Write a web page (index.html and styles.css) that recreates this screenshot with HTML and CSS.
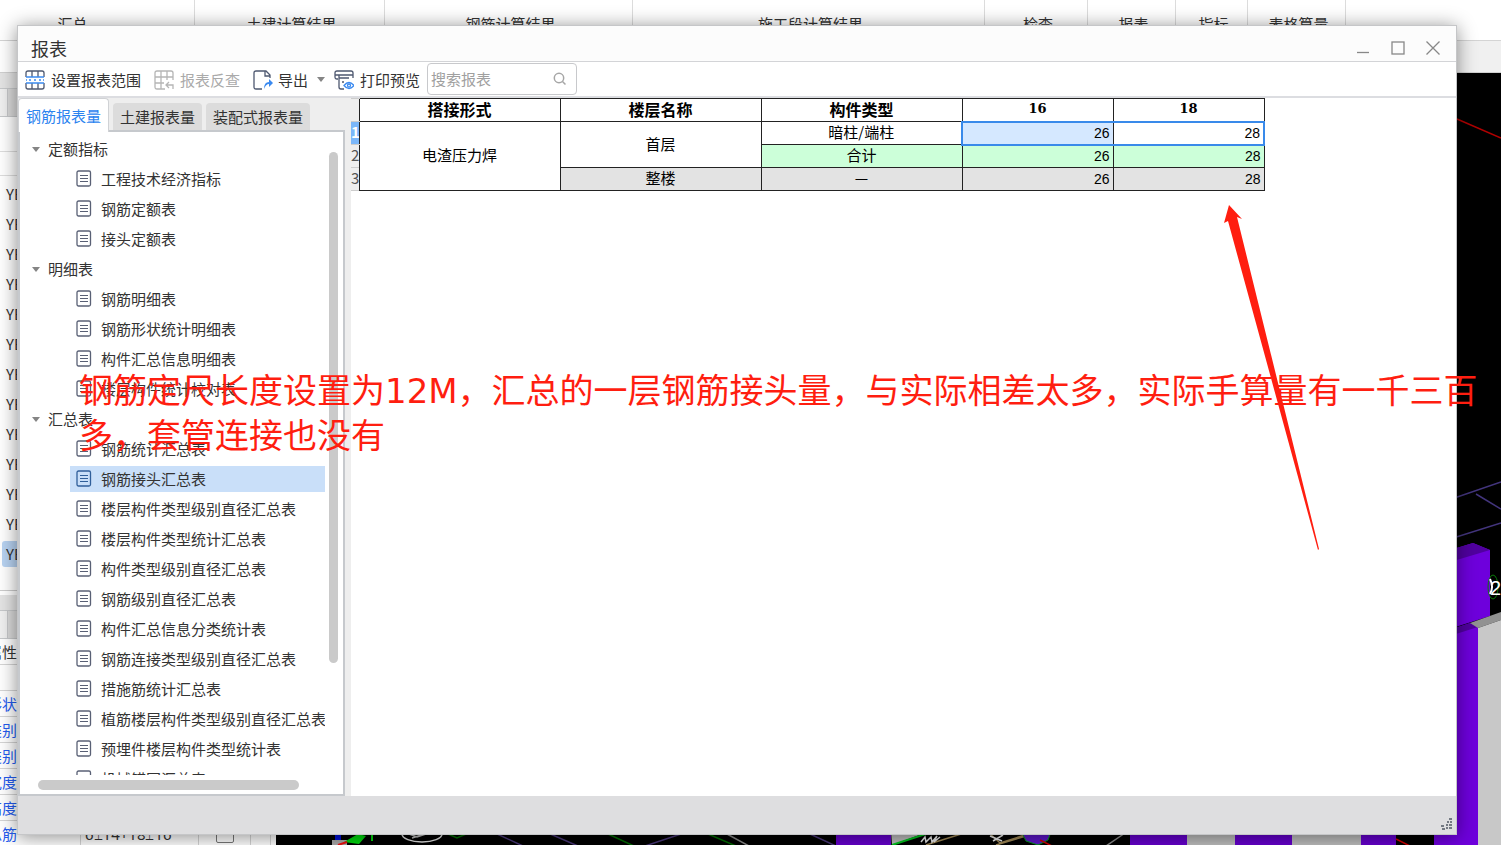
FILE: index.html
```html
<!DOCTYPE html>
<html lang="zh-CN">
<head>
<meta charset="utf-8">
<title>报表</title>
<link rel="stylesheet" href="styles.css">
</head>
<body>
<svg class="defs" aria-hidden="true">
  <symbol id="doc" viewBox="0 0 16 17"><rect x="1" y="1" width="13.500" height="15" rx="1.500" fill="none" stroke="currentColor" stroke-width="1.300"/><path d="M4 5.500h8M4 8.500h8M4 11.500h8" stroke="currentColor" stroke-width="1.200"/></symbol>
</svg>
<div class="desktop">
  <div class="app" aria-hidden="true">
    <div class="ribbon">
      <span class="group g-sum">汇总</span><span class="group g-civil">土建计算结果</span><span class="group g-rebar">钢筋计算结果</span><span class="group g-stage">施工段计算结果</span><span class="group g-check">检查</span><span class="group g-report">报表</span><span class="group g-index">指标</span><span class="group g-table">表格算量</span>
    </div>
    <div class="substrip"></div>
    <div class="workspace">
      <div class="side">
        <div class="bar"></div>
        <div class="side-tabs"></div>
        <div class="side-tools"></div>
        <div class="side-search"></div>
        <div class="members">
          <span>YBZ</span><span>YBZ</span><span>YBZ</span><span>YBZ</span><span>YBZ</span><span>YBZ</span><span>YBZ</span><span>YBZ</span><span>YBZ</span><span>YBZ</span><span>YBZ</span><span>YBZ</span><span class="current">YBZ</span>
        </div>
        <div class="bar lower"></div>
        <div class="side-tabs"></div>
        <div class="props">
          <div class="prop head"><b>属性</b></div>
          <div class="prop"><b></b></div>
          <div class="prop"><b>形状</b></div>
          <div class="prop"><b>类别</b></div>
          <div class="prop"><b>类别</b></div>
          <div class="prop"><b>宽度</b></div>
          <div class="prop"><b>高度</b></div>
          <div class="prop"><b>纵筋</b><span class="value">6⌶14+18⌶16</span><span class="tick"><i></i></span><span class="rest"></span></div>
        </div>
      </div>
      <svg class="scene" viewBox="276 73 1225 772" preserveAspectRatio="xMaxYMax slice">
        <rect x="276" y="73" width="1225" height="772" fill="#000"/>
        <path d="M1457 119l44 19" stroke="#b00000" stroke-width="1.500"/>
        <path d="M1450 499.500l51-17.500M1476 494l25 15M1450 539l51-16" stroke="#43357d" stroke-width="1.500"/>
        <path d="M1440 553l33-10 17 7v66l-50 16z" fill="#6e00dc"/>
        <path d="M1440 553l33-10 17 7-50 15z" fill="#50009f"/>
        <ellipse cx="1493" cy="587" rx="5" ry="12" fill="none" stroke="#0a7a0a"/>
        <path d="M1490 579q4 8 0 15" stroke="#fff" stroke-width="2" fill="none"/>
        <text x="1490" y="595" class="axis">23</text>
        <path d="M1440 633l30-10 8 4v218h-44v-11z" fill="#6e00dc"/>
        <path d="M1440 633l30-10 8 4-38 12z" fill="#50009f"/>
        <path d="M1470 623l31-11v8l-23 8z" fill="#929292"/>
        <path d="M1478 628l23-8v225h-23z" fill="#c8c8c8"/>
        <path d="M836 830h55v15h-55zM1130 830h57v15h-57zM1235 830h57v15h-57zM1361 830h35v15h-35z" fill="#6400cb"/>
        <path d="M891 830h42l-41 15zM1187 830h48v15h-48zM1292 830h69v15h-69z" fill="#bcbcbc"/>
        <path d="M892 845l46-15" stroke="#00c41e" stroke-width="2"/>
        <path d="M926 845l48-15M988 832l12 11 28-9M996 845l30-9" stroke="#9d8655" stroke-width="1.500" fill="none"/>
        <path d="M921 842l4-5 1 5 5-5 1 5 5-6-3 6 6-5M990 836l12 5M993 841l10-6" stroke="#e8e8e8" stroke-width="1.500" fill="none"/>
        <path d="M1022 833l4 8 12 4 10-5 3-8z" fill="#5b16c6" stroke="#009a1a"/>
        <path d="M1040 840l12 6M1396 839l14 7" stroke="#d00000" stroke-width="1.500"/>
        <path d="M1106 846l22-15M727 834l22 12" stroke="#888" stroke-width="1.500"/>
        <path d="M495 833l28 13M548 833l30 13M645 846l36-12M810 834l26 12" stroke="#493778" stroke-width="1.500"/>
        <path d="M448 834l9 4 9-4M608 834l26 12M708 834l28 12" stroke="#006c00" stroke-width="1.500" fill="none"/>
        <ellipse cx="422" cy="834" rx="20" ry="8" fill="none" stroke="#ddd" stroke-width="1.500"/>
        <path d="M409 834l8 3 15-5M412 838l16-5" stroke="#bbb" stroke-width="1.500" fill="none"/>
        <path d="M335 834h6v7h-6z" fill="#0010d8"/><path d="M332 840h15v5h-15z" fill="#aaa"/>
        <path d="M344 842l14-8 8 2-7 8zM371 834h2v7h-2z" fill="#00d80e"/>
        <path d="M338 845l9-3" stroke="#f01010" stroke-width="2"/>
      </svg>
    </div>
  </div>

  <main class="dialog">
    <header class="titlebar">
      <h1>报表</h1>
      <div class="controls">
        <button aria-label="最小化"><svg viewBox="0 0 14 14"><path d="M1 11.500h12"/></svg></button>
        <button aria-label="最大化"><svg viewBox="0 0 14 14"><rect x="1" y="1" width="12" height="12"/></svg></button>
        <button aria-label="关闭"><svg viewBox="0 0 14 14"><path d="M.5.5l13 13M13.500.5l-13 13"/></svg></button>
      </div>
    </header>
    <div class="toolbar">
      <button class="tool"><svg class="ico" viewBox="0 0 20 20"><path d="M1 7V3q0-2 2-2h14q2 0 2 2v4M1 13v4q0 2 2 2h14q2 0 2-2v-4M7 1v6M13 1v6M7 13v6M13 13v6" class="ln"/><path d="M1 7h18M1 13h18M1 10h1M4 10h2M9 10h2M14 10h2M18 10h1" class="bl"/></svg>设置报表范围</button>
      <button class="tool off" disabled><svg class="ico" viewBox="0 0 20 20"><path d="M11 19H3q-2 0-2-2V3q0-2 2-2h14q2 0 2 2v7M1 7h18M1 13h9M7 1v18M13 1v9M19 19v-4h-7M15 12l-3 3 3 3" class="ln"/></svg>报表反查</button>
      <button class="tool export"><svg class="ico" viewBox="0 0 20 20"><path d="M9 19H3q-2 0-2-2V3q0-2 2-2h10l4 4v3M12 1v5h5" class="ln"/><path d="M11 19q0-7 5-7V9l4 4-4 4v-3q-3 0-5 5z" class="fill"/></svg>导出<i class="caret"></i></button>
      <button class="tool"><svg class="ico" viewBox="0 0 20 20"><path d="M4 9H3Q1 9 1 7V3q0-2 2-2h14q2 0 2 2v5M1 5h18M5 5v12q0 2 2 2h3M5 8h10M8 12h2" class="ln"/><path d="M10 15.500q5-6 10 0-5 6-10 0z" class="bl"/><circle cx="15" cy="15.500" r="1.500" class="bl"/></svg>打印预览</button>
      <label class="search"><input type="text" placeholder="搜索报表" aria-label="搜索报表"><svg viewBox="0 0 14 14"><circle cx="6" cy="6" r="4.700"/><path d="M9.500 9.500l3 3"/></svg></label>
    </div>
    <div class="body">
      <aside class="sidebar">
        <div class="tabs" role="tablist">
          <button role="tab" aria-selected="true" class="tab active">钢筋报表量</button>
          <button role="tab" aria-selected="false" class="tab">土建报表量</button>
          <button role="tab" aria-selected="false" class="tab">装配式报表量</button>
        </div>
        <div class="panel">
          <div class="tree">
            <button class="node"><i class="caret"></i>定额指标</button>
            <button class="leaf"><svg><use href="#doc"/></svg>工程技术经济指标</button>
            <button class="leaf"><svg><use href="#doc"/></svg>钢筋定额表</button>
            <button class="leaf"><svg><use href="#doc"/></svg>接头定额表</button>
            <button class="node"><i class="caret"></i>明细表</button>
            <button class="leaf"><svg><use href="#doc"/></svg>钢筋明细表</button>
            <button class="leaf"><svg><use href="#doc"/></svg>钢筋形状统计明细表</button>
            <button class="leaf"><svg><use href="#doc"/></svg>构件汇总信息明细表</button>
            <button class="leaf"><svg><use href="#doc"/></svg>楼层构件统计校对表</button>
            <button class="node"><i class="caret"></i>汇总表</button>
            <button class="leaf"><svg><use href="#doc"/></svg>钢筋统计汇总表</button>
            <button class="leaf selected"><svg><use href="#doc"/></svg>钢筋接头汇总表</button>
            <button class="leaf"><svg><use href="#doc"/></svg>楼层构件类型级别直径汇总表</button>
            <button class="leaf"><svg><use href="#doc"/></svg>楼层构件类型统计汇总表</button>
            <button class="leaf"><svg><use href="#doc"/></svg>构件类型级别直径汇总表</button>
            <button class="leaf"><svg><use href="#doc"/></svg>钢筋级别直径汇总表</button>
            <button class="leaf"><svg><use href="#doc"/></svg>构件汇总信息分类统计表</button>
            <button class="leaf"><svg><use href="#doc"/></svg>钢筋连接类型级别直径汇总表</button>
            <button class="leaf"><svg><use href="#doc"/></svg>措施筋统计汇总表</button>
            <button class="leaf"><svg><use href="#doc"/></svg>植筋楼层构件类型级别直径汇总表</button>
            <button class="leaf"><svg><use href="#doc"/></svg>预埋件楼层构件类型统计表</button>
            <button class="leaf"><svg><use href="#doc"/></svg>机械锚固汇总表</button>
          </div>
          <div class="vbar"><i></i></div>
          <div class="hbar"><i></i></div>
        </div>
      </aside>
      <section class="report">
        <table>
          <colgroup><col class="c-no"><col class="c-text"><col class="c-text"><col class="c-text"><col class="c-num"><col class="c-num"></colgroup>
          <thead><tr><td class="no"></td><th>搭接形式</th><th>楼层名称</th><th>构件类型</th><th class="dia">16</th><th class="dia">18</th></tr></thead>
          <tbody>
            <tr><td class="no on">1</td><td rowspan="3">电渣压力焊</td><td rowspan="2">首层</td><td>暗柱/端柱</td><td class="num pick first">26</td><td class="num pick last">28</td></tr>
            <tr class="subtotal"><td class="no">2</td><td>合计</td><td class="num">26</td><td class="num">28</td></tr>
            <tr class="total"><td class="no">3</td><td>整楼</td><td>—</td><td class="num">26</td><td class="num">28</td></tr>
          </tbody>
        </table>
      </section>
    </div>
    <footer class="status"><svg viewBox="0 0 12 12"><path d="M9 1h3M7 4h2M10 4h2M6 7h2M9 7h3M1 8h3M2 11h3M6 10h2M9 10h3" /></svg></footer>
  </main>

  <p class="note">钢筋定尺长度设置为12M，汇总的一层钢筋接头量，与实际相差太多，实际手算量有一千三百多，套管连接也没有</p>
  <svg class="arrow" viewBox="0 0 96 346" aria-hidden="true"><path d="M5 0l13 14-5-2L95 344l-1 1L4 16l-4 2z" /></svg>
</div>
</body>
</html>
```
FILE: styles.css
```css
* { box-sizing: border-box; }
body {
  margin: 0;
  color: #333;
  font: 15px/20px "Noto Sans CJK SC", sans-serif;
}
button {
  margin: 0;
  padding: 0;
  border: 0;
  background: none;
  color: inherit;
  font: inherit;
  white-space: nowrap;
}
.defs { position: absolute; width: 0; height: 0; }
.desktop { position: relative; height: 100vh; overflow: hidden; }

/* main application behind the dialog */
.app { display: flex; flex-direction: column; height: 100%; background: #fff; }
.ribbon { display: flex; flex: 0 0 41px; border-bottom: 1px solid #d4d4d4; }
.group { padding: 14px 0 0 4px; border-right: 1px solid #dcdcdc; text-align: center; }
.g-sum { flex: 0 0 13%; padding-right: 53px; }
.g-civil { flex: 0 0 190px; }
.g-rebar { flex: 0 0 248px; }
.g-stage { flex: 0 0 352px; }
.g-check { flex: 0 0 103px; }
.g-report { flex: 0 0 88px; }
.g-index { flex: 0 0 72px; }
.g-table { flex: 0 0 98px; }
.substrip { flex: 0 0 32px; border-bottom: 1px solid #d0d0d0; background: linear-gradient(90deg, #fff 276px, #f0f0f0 276px); }
.workspace { display: flex; flex: 1; min-height: 0; }
.side { flex: 0 0 276px; overflow: hidden; background: #fff; }
.bar { height: 16px; background: #e4e4e4; border-bottom: 1px solid #c6c8ca; }
.side-tabs { height: 28px; background: linear-gradient(90deg, #f0f0f0 7px, #c6c8ca 7px, #c6c8ca 8px, #dadada 8px); border-bottom: 1px solid #c6c8ca; }
.side-tools { height: 35px; border-bottom: 1px solid #ddd; }
.side-search { height: 24px; border-bottom: 1px solid #ddd; }
.members { display: flex; flex-direction: column; height: 415px; padding-top: 5px; border-bottom: 1px solid #ccc; }
.members span { height: 26px; margin: 0 0 4px 2px; padding: 3px 4px; border-radius: 3px; }
.members .current { background: #b8d3f2; }
.lower { margin-top: 4px; }
.prop { display: flex; height: 26px; border-bottom: 1px solid #d5d5d5; color: #245cf0; }
.prop b { flex: 0 0 94px; margin-left: -13px; padding-top: 3px; font-weight: 400; border-right: 1px solid #d5d5d5; }
.prop.head { color: #333; }
.value { width: 118px; padding: 3px 4px; border-right: 1px solid #d5d5d5; color: #333; font-family: "Noto Sans", "DejaVu Sans", sans-serif; }
.tick { width: 52px; padding: 4px 17px; border-right: 1px solid #d5d5d5; }
.tick i { display: block; width: 18px; height: 18px; border: 1px solid #777; border-radius: 2px; }
.rest { width: 20px; border-right: 1px solid #d5d5d5; }
.scene { flex: 1; min-width: 0; height: 100%; }
.axis { fill: #fff; font: 20px "Liberation Sans", sans-serif; }

/* report window */
.dialog {
  position: absolute;
  inset: 25px 44px 10px 17px;
  display: flex;
  flex-direction: column;
  border: 1px solid #c5c6c8;
  background: #fff;
  box-shadow: 0 2px 18px rgba(0, 0, 0, .45);
}
.titlebar {
  display: flex;
  flex: 0 0 36px;
  align-items: center;
  justify-content: space-between;
  padding: 8px 16px 0 13px;
  border-bottom: 1px solid #d3d4d7;
  background: #fcfcfc;
}
h1 { margin: 0; font-size: 18px; line-height: 24px; font-weight: 400; }
.controls { display: flex; gap: 21px; }
.controls svg { display: block; width: 14px; height: 14px; fill: none; stroke: #888; stroke-width: 1.3; }
.toolbar { display: flex; flex: 0 0 36px; align-items: center; padding-left: 7px; border-bottom: 2px solid #dcdde1; }
.tool { display: flex; align-items: center; gap: 6px; height: 30px; margin-right: 13px; padding-top: 1px; }
.off { color: #aaa; }
.export { gap: 5px; margin-right: 9px; }
.export .caret { margin-left: 4px; }
.ico { width: 20px; height: 20px; }
.ico path, .ico circle { fill: none; stroke: #4e5870; stroke-width: 1.3; }
.ico .bl { stroke: #3b8af0; }
.ico .fill { fill: #3b8af0; stroke: none; }
.off .ico path { stroke: #b5b5b5; }
.caret { width: 0; height: 0; border: 4px solid transparent; border-top: 5px solid #858585; border-bottom: 0; }
.search {
  display: flex;
  align-items: center;
  width: 150px;
  height: 32px;
  margin-left: -6px;
  padding: 0 9px 0 3px;
  border: 1px solid #c8c9cc;
  border-radius: 4px;
}
.search input { flex: 1; min-width: 0; padding: 0; border: 0; outline: 0; background: none; font: inherit; }
.search input::placeholder { color: #a0a0a0; opacity: 1; }
.search svg { width: 14px; height: 14px; fill: none; stroke: #a6a6a6; stroke-width: 1.5; }
.body { display: flex; flex: 1; min-height: 0; }
.sidebar { display: flex; flex: 0 0 333px; flex-direction: column; padding-right: 6px; background: #eee; }
.tabs { display: flex; flex: 0 0 32px; align-items: flex-end; gap: 4px; }
.tab { height: 27px; padding: 0 7px; border-radius: 4px 4px 0 0; background: #dcdcdc; }
.tab.active { z-index: 1; height: 34px; margin-bottom: -2px; border: 1px solid #d0d2d5; border-bottom: 0; background: #fff; color: #2b83ef; }
.panel {
  display: grid;
  flex: 1;
  grid-template: minmax(0, 1fr) 19px / minmax(0, 1fr) 18px;
  min-height: 0;
  border: 2px solid #c6c9cd;
  background: #fff;
}
.tree { display: flex; flex-direction: column; overflow: hidden; padding-top: 4px; }
.node, .leaf { display: flex; flex: 0 0 26px; align-items: center; margin-bottom: 4px; }
.node { gap: 8px; padding-left: 12px; }
.leaf { gap: 9px; margin-left: 50px; padding-left: 6px; }
.leaf svg { flex: 0 0 16px; height: 18px; padding-bottom: 1px; color: #596075; }
.selected { background: #c9dff9; }
.selected svg { color: #305f9a; }
.vbar { padding: 20px 5px 0 4px; }
.vbar i { display: block; height: 82%; border-radius: 5px; background: #cacaca; }
.hbar { padding: 5px 0 0 18px; }
.hbar i { display: block; width: 91%; height: 10px; border-radius: 5px; background: #cacaca; }

/* spreadsheet */
.report { flex: 1; overflow: hidden; }
table { width: 914px; border-collapse: collapse; table-layout: fixed; color: #000; }
.c-no { width: 8px; }
.c-text { width: 201px; }
th, td { height: 23px; padding: 0 0 2px; border: 1px solid #222; text-align: center; line-height: 18px; }
thead th { font: 700 16px/18px "Noto Sans CJK SC", sans-serif; }
thead th.dia { font: 700 13px/18px "DejaVu Serif", serif; }
td.num { padding: 0 3px 0 0; text-align: right; font-family: "Liberation Sans", sans-serif; font-size: 14px; }
td.no { overflow: hidden; border-color: #ccc; border-width: 1px 0; background: #eee; color: #555; }
td.no.on { background: #7bb7fa; color: #fff; font-weight: 700; }
.subtotal td:not(.no) { background: #ccffd9; }
.total td:not(.no) { background: #e3e3e3; }
td.pick { border-top: 2px solid #398aea; border-bottom: 2px solid #398aea; }
td.first { border-left: 2px solid #398aea; background: #d5e8ff; }
td.last { border-right: 2px solid #398aea; }
.status { display: flex; flex: 0 0 38px; align-items: flex-end; justify-content: flex-end; padding: 4px; background: #dedee0; }
.status svg { width: 12px; height: 12px; stroke: #737982; stroke-width: 2; }

/* markup drawn over the window */
.note {
  position: absolute;
  inset: 369px 18px auto 79px;
  margin: 0;
  color: #ff1e10;
  font: 34px/45px "DejaVu Sans", "Noto Sans CJK SC", sans-serif;
}
.arrow { position: absolute; top: 205px; left: 1224px; width: 96px; height: 346px; fill: #ff1e10; }
```
